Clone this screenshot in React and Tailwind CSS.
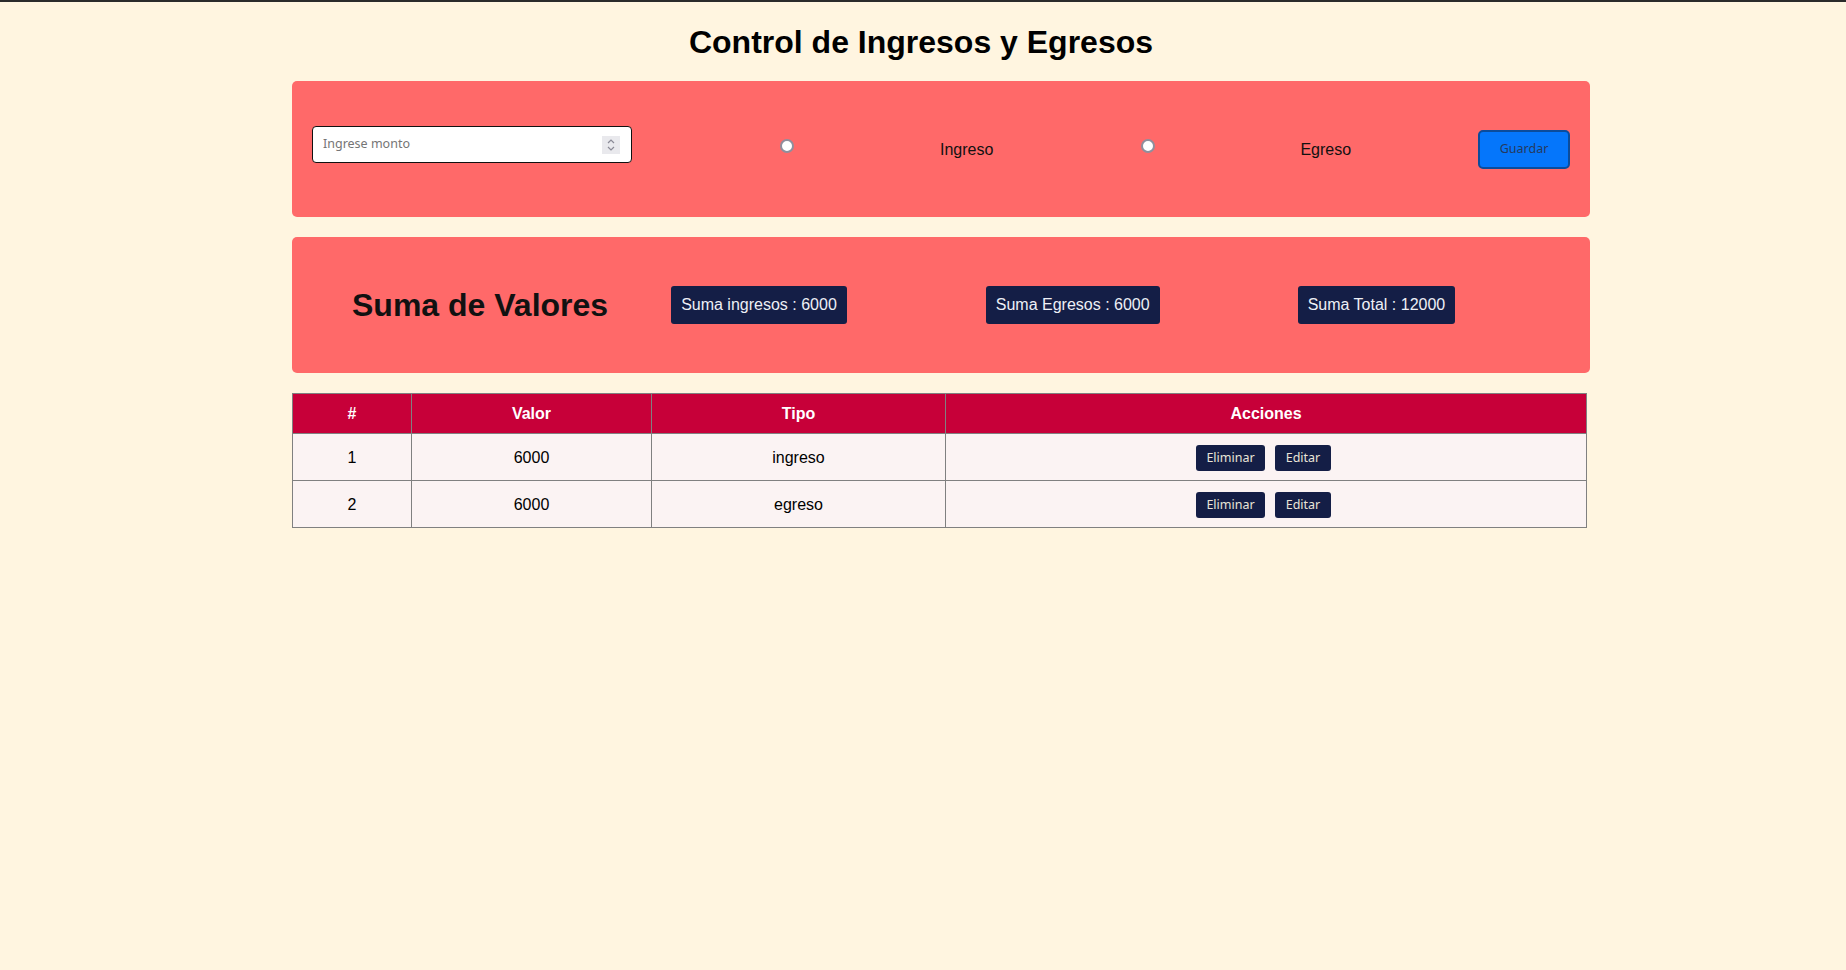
import React from 'react';

const movimientos = [
    { id: 1, valor: 6000, tipo: 'ingreso' },
    { id: 2, valor: 6000, tipo: 'egreso' },
];

function Spinner() {
    // caja gris del input number (flechas arriba / abajo)
    return (
        <span className="flex h-[18px] w-[18px] flex-col items-center justify-center bg-[#e9e9ed]">
            <svg width="10" height="16" viewBox="0 0 10 16" fill="none" stroke="#8a8a96" strokeWidth="1.2">
                <path d="M2 6 L5 3 L8 6" />
                <path d="M2 10 L5 13 L8 10" />
            </svg>
        </span>
    );
}

export default function App() {
    const ingresos = movimientos.filter(m => m.tipo === 'ingreso').reduce((a, m) => a + m.valor, 0);
    const egresos = movimientos.filter(m => m.tipo === 'egreso').reduce((a, m) => a + m.valor, 0);

    return (
        <div className="min-h-screen bg-[#FFF5E0] font-['Liberation_Sans',Arial,sans-serif] text-black">
            <div className="h-[2px] bg-[#2b2b2b]" />
            <h1 className="mt-[22px] mb-[20px] pr-[4px] text-center text-[32px] font-bold leading-[37px]">
                Control de Ingresos y Egresos
            </h1>

            <div className="ml-[292px] flex w-[1298px] flex-col gap-[20px]">
                <form className="flex h-[136px] items-center rounded-[5px] bg-[#FF6969] px-[20px]">
                    <div className="mb-[9px] flex h-[37px] w-[320px] items-center rounded-[4px] border border-[#111] bg-white pl-[10px] pr-[11px]">
                        <input
                            type="text"
                            placeholder="Ingrese monto"
                            className="min-w-0 flex-1 bg-transparent font-['Noto_Sans',sans-serif] text-[12.5px] text-black outline-none placeholder:text-[#757575]"
                        />
                        <Spinner />
                    </div>
                    <input
                        type="radio"
                        name="tipo"
                        className="mb-[6px] ml-[148px] h-[14px] w-[14px] appearance-none rounded-full border-2 border-[#8f8f9d] bg-white"
                    />
                    <label className="ml-[146px] mt-[2px] text-[16px] leading-[18px] text-[#111]">Ingreso</label>
                    <input
                        type="radio"
                        name="tipo"
                        className="mb-[6px] ml-[148px] h-[14px] w-[14px] appearance-none rounded-full border-2 border-[#8f8f9d] bg-white"
                    />
                    <label className="ml-[145px] mt-[2px] text-[16px] leading-[18px] text-[#111]">Egreso</label>
                    <button
                        type="button"
                        className="ml-auto h-[39px] w-[92px] rounded-[5px] border-2 border-[#0b4c9c] bg-[#0576fb] font-['Noto_Sans',sans-serif] text-[12.5px] text-[#253a5e]"
                    >
                        Guardar
                    </button>
                </form>

                <div className="flex h-[136px] items-center rounded-[5px] bg-[#FF6969] pl-[60px]">
                    <h2 className="text-[32px] font-bold leading-[37px] text-[#111]">Suma de Valores</h2>
                    <span className="ml-[63px] rounded-[3px] bg-[#141E46] p-[10px] text-[16px] leading-[18px] text-[#eef0f6]">
                        Suma ingresos : {ingresos}
                    </span>
                    <span className="ml-[139px] rounded-[3px] bg-[#141E46] p-[10px] text-[16px] leading-[18px] text-[#eef0f6]">
                        Suma Egresos : {egresos}
                    </span>
                    <span className="ml-[138px] rounded-[3px] bg-[#141E46] p-[10px] text-[16px] leading-[18px] text-[#eef0f6]">
                        Suma Total : {ingresos + egresos}
                    </span>
                </div>

                <table className="w-[1295px] table-fixed border-collapse border border-[#808080] text-center text-[16px]">
                    <thead>
                        <tr className="h-[40px] bg-[#C70039] text-white">
                            <th className="w-[119px] border border-[#808080] font-bold">#</th>
                            <th className="w-[240px] border border-[#808080] font-bold">Valor</th>
                            <th className="w-[294px] border border-[#808080] font-bold">Tipo</th>
                            <th className="border border-[#808080] font-bold">Acciones</th>
                        </tr>
                    </thead>
                    <tbody className="bg-[#fbf3f3]">
                        {movimientos.map((m) => (
                            <tr key={m.id} className="h-[47px]">
                                <td className="border border-[#808080] pt-[2px]">{m.id}</td>
                                <td className="border border-[#808080] pt-[2px]">{m.valor}</td>
                                <td className="border border-[#808080] pt-[2px]">{m.tipo}</td>
                                <td className="border border-[#808080] pt-[2px]">
                                    <div className="flex justify-center gap-[10px] pr-[5px]">
                                        <button className="h-[26px] w-[69px] rounded-[3px] bg-[#141E46] font-['Noto_Sans',sans-serif] text-[12.5px] text-[#e9e4d8]">
                                            Eliminar
                                        </button>
                                        <button className="h-[26px] w-[56px] rounded-[3px] bg-[#141E46] font-['Noto_Sans',sans-serif] text-[12.5px] text-[#e9e4d8]">
                                            Editar
                                        </button>
                                    </div>
                                </td>
                            </tr>
                        ))}
                    </tbody>
                </table>
            </div>
        </div>
    );
}
